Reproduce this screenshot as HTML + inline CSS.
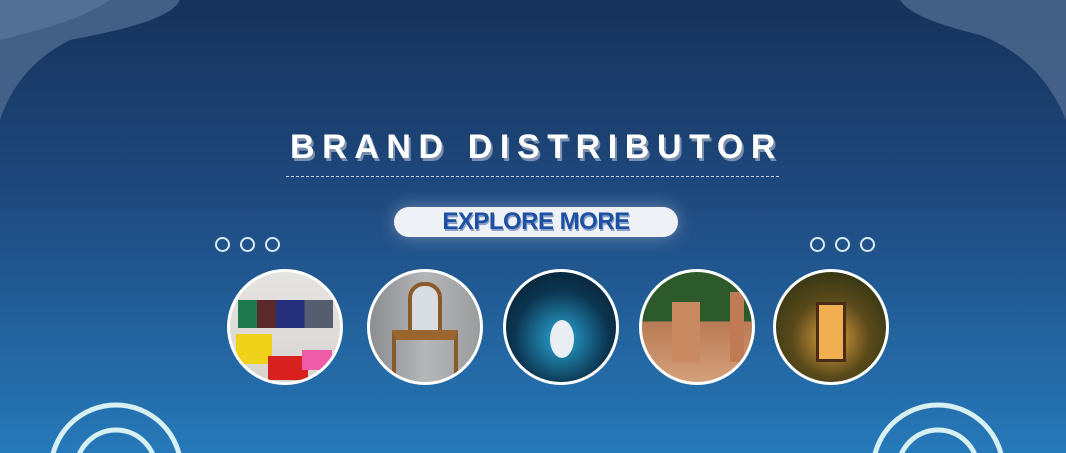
<!DOCTYPE html><html><head><style>
*{margin:0;padding:0;box-sizing:border-box}
html,body{width:1066px;height:453px;overflow:hidden}
body{position:relative;background:linear-gradient(180deg,#17325b 0%,#1f4a80 45%,#2679b9 100%);font-family:"Liberation Sans",sans-serif}
.t{position:absolute;left:0;width:1066px;top:128px;text-align:center;color:#fff;font-weight:bold;font-size:34px;letter-spacing:7.6px;text-indent:7px;text-shadow:2px 3px 0 #7a8fb0}
.line{position:absolute;left:286px;width:493px;top:176px;border-top:1px dashed #c8d4e6}
.btn{position:absolute;left:394px;top:207px;width:284px;height:30px;border-radius:15px;background:#eef1f6;box-shadow:0 0 18px rgba(255,255,255,.35);text-align:center;color:#1d50a3;font-weight:bold;font-size:24px;line-height:30px;letter-spacing:-0.5px;text-shadow:1px 2px 0 #8aa0c8}
.c{position:absolute;width:116px;height:116px;border-radius:50%;border:3px solid #fff;top:269px;overflow:hidden}
.d{position:absolute;width:15px;height:15px;border:2.5px solid #d9ecf5;border-radius:50%;top:237px}
</style></head><body>
<svg width="1066" height="453" style="position:absolute;left:0;top:0">
<path d="M0 0H180C170 20 120 30 70 40C30 60 10 90 0 120Z" fill="#4d6a90" opacity=".8"/>
<path d="M0 0H110C80 20 40 30 0 40Z" fill="#5e7ba0" opacity=".6"/>
<path d="M900 0H1066V120C1050 80 1020 50 980 35C940 25 910 15 900 0Z" fill="#4d6a90" opacity=".8"/>
<g fill="none" stroke="#d6f0f4" stroke-width="5">
<circle cx="116" cy="470" r="65"/><circle cx="116" cy="470" r="40"/>
<circle cx="938" cy="470" r="65"/><circle cx="938" cy="470" r="40"/>
</g></svg>
<div class="t">BRAND DISTRIBUTOR</div>
<div class="line"></div>
<div class="btn">EXPLORE MORE</div>
<div class="d" style="left:215px"></div><div class="d" style="left:240px"></div><div class="d" style="left:265px"></div>
<div class="d" style="left:810px"></div><div class="d" style="left:835px"></div><div class="d" style="left:860px"></div>
<div class="c" style="left:227px;background:linear-gradient(#e6e4e2,#d8d4d0)">
<div style="position:absolute;left:8px;top:28px;width:95px;height:28px;background:linear-gradient(90deg,#1e7a4e 0 20%,#5a2a2a 20% 40%,#26307a 40% 70%,#565d6e 70%)"></div>
<div style="position:absolute;left:6px;top:62px;width:36px;height:30px;background:#f0d21a"></div>
<div style="position:absolute;left:38px;top:84px;width:40px;height:24px;background:#d8201e"></div>
<div style="position:absolute;left:72px;top:78px;width:30px;height:20px;background:#ee5ca8"></div></div>
<div class="c" style="left:367px;background:linear-gradient(90deg,#8a8c90,#b4b6b8 50%,#9a9c9e)">
<div style="position:absolute;left:38px;top:10px;width:34px;height:52px;border-radius:16px 16px 0 0;border:4px solid #8b5a2b;background:#d7dde0"></div>
<div style="position:absolute;left:22px;top:58px;width:66px;height:44px;border-top:10px solid #9b6530;border-left:4px solid #8b5a2b;border-right:4px solid #8b5a2b"></div></div>
<div class="c" style="left:503px;background:radial-gradient(circle at 50% 60%,#2aa8d8,#0b3550 55%,#061a2a)">
<div style="position:absolute;left:44px;top:48px;width:24px;height:38px;border-radius:50%;background:#e8eef2"></div></div>
<div class="c" style="left:639px;background:linear-gradient(#2c5a2a 0 45%,#b87a55 45%,#d4a07a)">
<div style="position:absolute;left:30px;top:30px;width:28px;height:60px;background:#c98a62"></div>
<div style="position:absolute;left:88px;top:20px;width:14px;height:70px;background:#c07a55"></div></div>
<div class="c" style="left:773px;background:radial-gradient(circle at 50% 60%,#e0a040,#5a4a1a 45%,#1e2a12)">
<div style="position:absolute;left:40px;top:30px;width:30px;height:60px;background:#f0b050;border:3px solid #4a2a18"></div></div>
</body></html>
